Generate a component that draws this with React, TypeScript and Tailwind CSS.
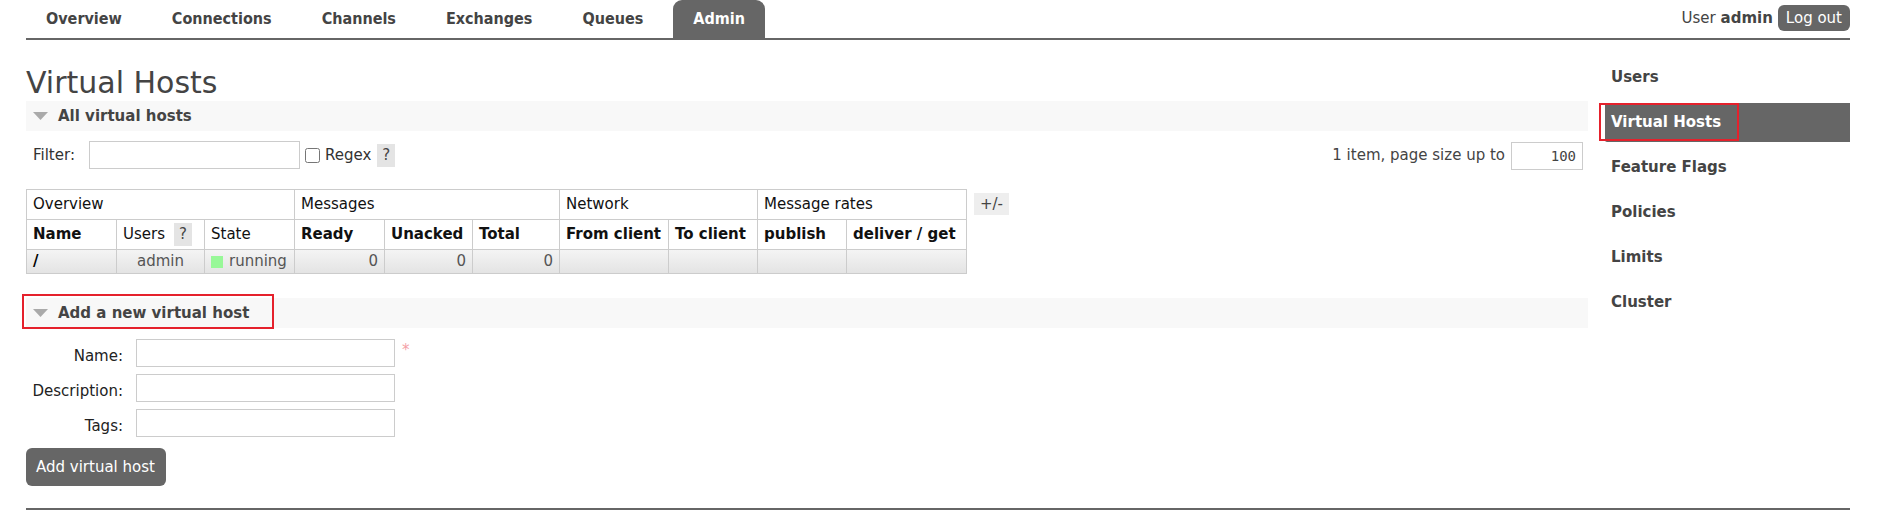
import React from "react"

const tabs = ["Overview", "Connections", "Channels", "Exchanges", "Queues", "Admin"]
const side = ["Users", "Virtual Hosts", "Feature Flags", "Policies", "Limits", "Cluster"]

function Help() {
  return (
    <span className="inline-flex h-[23px] w-[18px] items-center justify-center bg-[#e4e4e4] text-[#444]">?</span>
  )
}

function SectionBar({ title, marked }: { title: string; marked?: boolean }) {
  return (
    <div className="relative flex h-[30px] items-center bg-[#f8f8f8]">
      <svg width="15" height="8" viewBox="0 0 15 8" className="ml-[7px]">
        <path d="M0 0 L15 0 L7.5 8 Z" fill="#aaa" />
      </svg>
      <span className="ml-[10px] text-[15px] font-bold text-[#444]">{title}</span>
      {marked && (
        <div className="absolute left-[-4px] top-[-4px] h-[35px] w-[252px] border-2 border-[#e5212c]" />
      )}
    </div>
  )
}

export default function App() {
  const cell = "whitespace-nowrap border border-[#ccc] px-[6px]"
  const num = `${cell} text-right text-[#555]`
  return (
    <div className="w-[1882px] pl-[26px] pr-[32px] font-['DejaVu_Sans',Verdana,sans-serif] text-[15px] text-[#222]">
      {/* top menu */}
      <div className="flex h-[40px] justify-between border-b-2 border-[#666]">
        <div className="flex gap-[10px] font-['DejaVu_Sans_Condensed','DejaVu_Sans',sans-serif] text-[16px] font-bold [font-stretch:condensed]">
          {tabs.map((t) => (
            <div
              key={t}
              className={`flex h-[38px] items-center px-[20px] ${t === "Admin" ? "rounded-t-[9px] bg-[#666] text-white" : "text-[#444]"}`}
            >
              {t}
            </div>
          ))}
        </div>
        <div className="mt-[5px] flex h-[26px] items-center self-start text-[#444]">
          <span>
            User <b>admin</b>
          </span>
          <span className="ml-[5px] flex h-[26px] items-center rounded-[6px] bg-[#666] px-[8px] text-white">Log out</span>
        </div>
      </div>

      <div className="flex">
        {/* main column */}
        <div className="w-[1562px]">
          <h1 className="mt-[25px] text-[30px] leading-[36px] text-[#444]">Virtual Hosts</h1>
          <SectionBar title="All virtual hosts" />

          <div className="mt-[10px] flex h-[28px] items-center text-[#333]">
            <span className="ml-[7px]">Filter:</span>
            <input className="ml-[14px] h-[28px] w-[211px] border border-[#ccc] outline-none" />
            <input type="checkbox" className="m-0 ml-[5px] h-[15px] w-[15px]" />
            <span className="ml-[5px]">Regex</span>
            <span className="ml-[6px]">
              <Help />
            </span>
            <span className="ml-auto text-[#444]">1 item, page size up to</span>
            <input
              defaultValue="100"
              className="ml-[6px] mr-[5px] mt-[2px] h-[28px] w-[72px] border border-[#ccc] pr-[6px] text-right font-['DejaVu_Sans_Mono',monospace] text-[14px] text-[#444] outline-none"
            />
          </div>

          <div className="mt-[20px] flex items-start">
            <table className="table-fixed border-collapse text-[#111]">
              <colgroup>
                {[90, 88, 90, 90, 88, 87, 109, 89, 89, 120].map((w, i) => (
                  <col key={i} style={{ width: w }} />
                ))}
              </colgroup>
              <thead>
                <tr className="h-[30px]">
                  <th colSpan={3} className={`${cell} text-left font-normal`}>Overview</th>
                  <th colSpan={3} className={`${cell} text-left font-normal`}>Messages</th>
                  <th colSpan={2} className={`${cell} text-left font-normal`}>Network</th>
                  <th colSpan={2} className={`${cell} text-left font-normal`}>Message rates</th>
                </tr>
                <tr className="h-[30px] text-left">
                  <th className={cell}>Name</th>
                  <th className={`${cell} font-normal`}>
                    <span className="flex items-center gap-[9px]">
                      Users <Help />
                    </span>
                  </th>
                  <th className={`${cell} font-normal`}>State</th>
                  <th className={cell}>Ready</th>
                  <th className={cell}>Unacked</th>
                  <th className={cell}>Total</th>
                  <th className={cell}>From client</th>
                  <th className={cell}>To client</th>
                  <th className={cell}>publish</th>
                  <th className={cell}>deliver / get</th>
                </tr>
              </thead>
              <tbody>
                <tr className="h-[24px] bg-[linear-gradient(#f4f4f4,#e3e3e3)]">
                  <td className={`${cell} font-bold text-black`}>/</td>
                  <td className={`${cell} text-center text-[#555]`}>admin</td>
                  <td className={`${cell} text-[#555]`}>
                    <span className="flex items-center gap-[6px]">
                      <span className="h-[12px] w-[12px] bg-[#98f898]" />
                      running
                    </span>
                  </td>
                  <td className={num}>0</td>
                  <td className={num}>0</td>
                  <td className={num}>0</td>
                  <td className={cell} />
                  <td className={cell} />
                  <td className={cell} />
                  <td className={cell} />
                </tr>
              </tbody>
            </table>
            <span className="ml-[7px] mt-[4px] flex h-[22px] w-[35px] items-center justify-center bg-[#eee] text-[#444]">+/-</span>
          </div>

          <div className="mt-[24px]">
            <SectionBar title="Add a new virtual host" marked />
          </div>

          <div className="mt-[11px] flex flex-col gap-[7px]">
            {["Name:", "Description:", "Tags:"].map((l, i) => (
              <div key={l} className="flex items-start">
                <span className="w-[97px] pt-[6px] text-right leading-[22px]">{l}</span>
                <input className="ml-[13px] h-[28px] w-[259px] border border-[#ccc] outline-none" />
                {i === 0 && <span className="ml-[7px] mt-[4px] leading-[14px] text-[#f4a0a6]">*</span>}
              </div>
            ))}
          </div>

          <button className="mt-[11px] h-[38px] w-[140px] rounded-[6px] bg-[#666] px-[10px] text-left text-white">
            Add virtual host
          </button>
        </div>

        {/* sidebar */}
        <div className="ml-[17px] mt-[18px] flex-1 font-bold text-[#444]">
          {side.map((s) => (
            <div
              key={s}
              className={`relative mb-[6px] flex h-[39px] items-center pl-[6px] ${s === "Virtual Hosts" ? "rounded-l-[2px] bg-[#666] text-white" : ""}`}
            >
              {s}
              {s === "Virtual Hosts" && (
                <div className="absolute left-[-6px] top-0 h-[38px] w-[140px] border-2 border-[#e5212c]" />
              )}
            </div>
          ))}
        </div>
      </div>

      <div className="mt-[22px] border-t-2 border-[#666]" />
    </div>
  )
}
